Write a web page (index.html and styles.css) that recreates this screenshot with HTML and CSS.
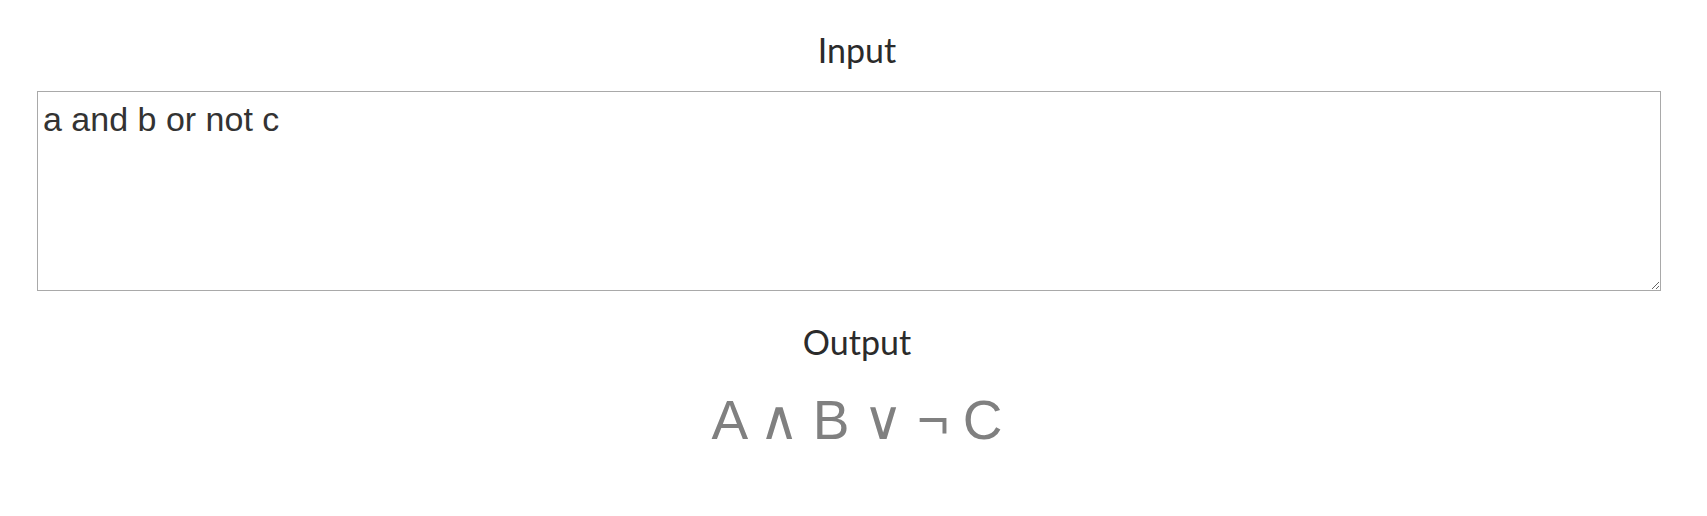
FILE: index.html
```html
<!DOCTYPE html>
<html>
<head>
<meta charset="utf-8">
<link rel="stylesheet" href="styles.css">
</head>
<body>
<div class="page">
  <h2 class="label label-input">Input</h2>
  <textarea class="input-box">a and b or not c</textarea>
  <h2 class="label label-output">Output</h2>
  <div class="result">A ∧ B ∨ ¬ C</div>
</div>
</body>
</html>
```
FILE: styles.css
```css
html, body {
  margin: 0;
  padding: 0;
  background: #ffffff;
}
.page {
  display: flex;
  flex-direction: column;
  align-items: stretch;
  padding: 30px 30px 0 37px;
}
.label {
  margin: 0;
  font-family: Lato, "Open Sans", sans-serif;
  font-weight: 400;
  font-size: 34px;
  line-height: 40px;
  color: #2b2b2b;
  text-align: center;
}
.input-box {
  display: block;
  box-sizing: border-box;
  width: 1624px;
  height: 200px;
  margin: 21px 0 0 0;
  padding: 3px 5px;
  border: 1px solid #a9a9a9;
  font-family: "Liberation Sans", Arial, sans-serif;
  font-size: 34px;
  line-height: 48px;
  color: #333333;
  resize: vertical;
  outline: none;
}
.label-output {
  margin-top: 31px;
}
.result {
  margin-top: 26px;
  font-family: "Liberation Sans", Arial, sans-serif;
  font-size: 55px;
  line-height: 64px;
  word-spacing: -1.5px;
  color: #808080;
  text-align: center;
}
```
